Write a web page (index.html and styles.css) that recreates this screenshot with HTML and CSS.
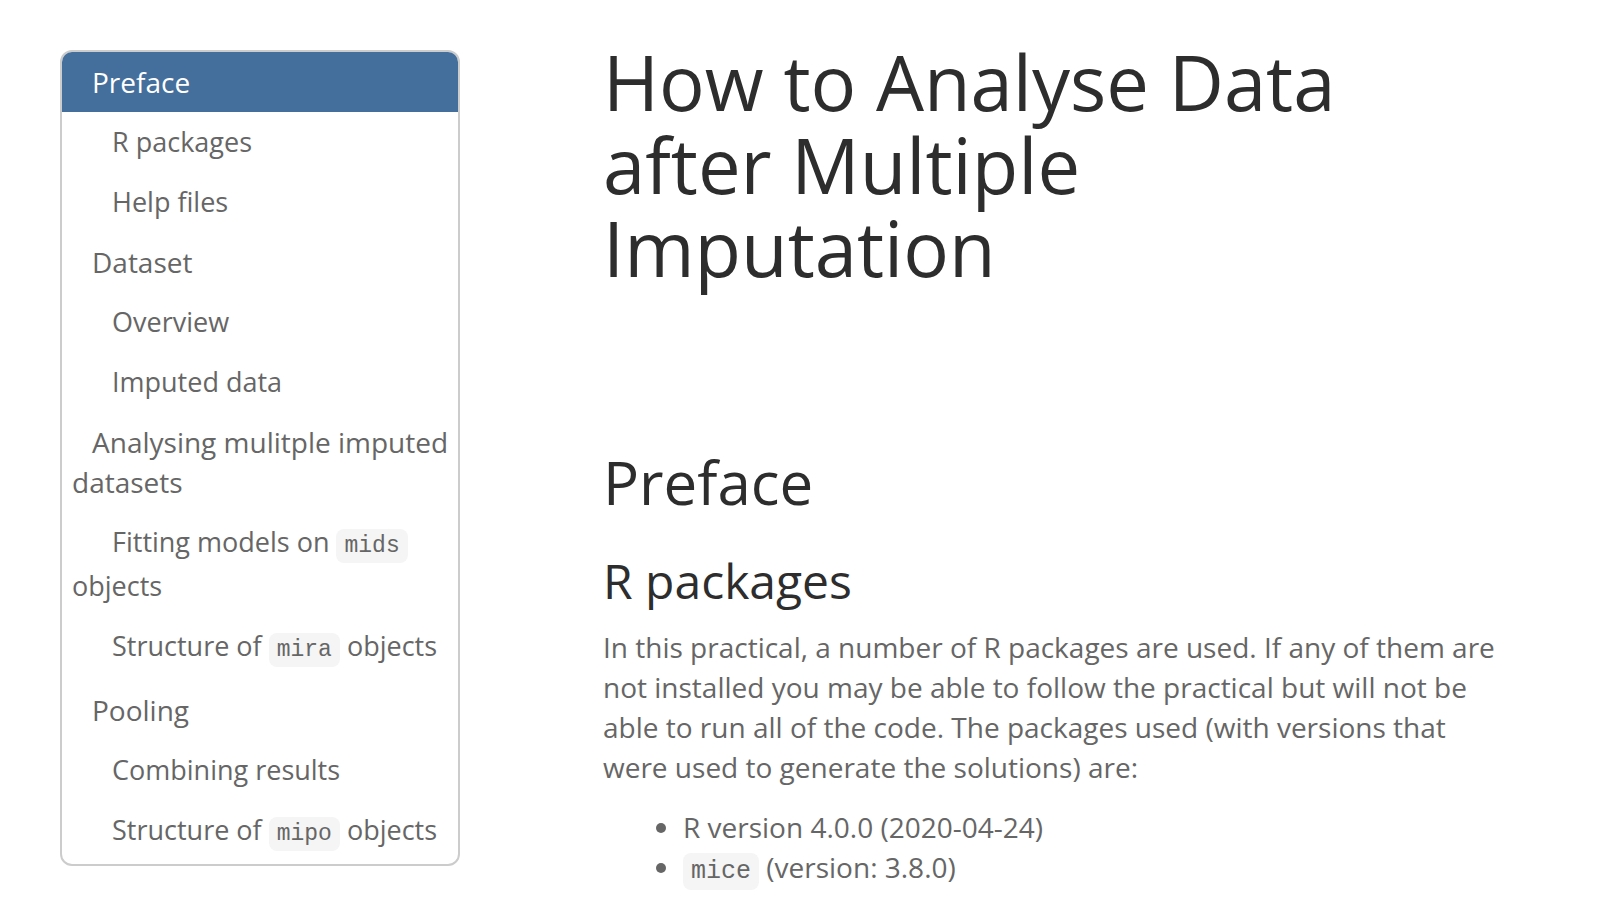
FILE: index.html
```html
<!DOCTYPE html>
<html lang="en">
<head>
<meta charset="utf-8">
<title>How to Analyse Data after Multiple Imputation</title>
<link rel="stylesheet" href="styles.css">
</head>
<body>
<div class="page">
  <nav class="toc">
    <a class="item active" href="#preface">Preface</a>
    <a class="item sub" href="#r-packages">R packages</a>
    <a class="item sub" href="#help">Help files</a>
    <a class="item" href="#dataset">Dataset</a>
    <a class="item sub" href="#overview">Overview</a>
    <a class="item sub" href="#imputed">Imputed data</a>
    <a class="item" href="#analysing">Analysing mulitple imputed datasets</a>
    <a class="item sub" href="#fitting">Fitting models on <code>mids</code> objects</a>
    <a class="item sub" href="#mira">Structure of <code>mira</code> objects</a>
    <a class="item" href="#pooling">Pooling</a>
    <a class="item sub" href="#combining">Combining results</a>
    <a class="item sub" href="#mipo">Structure of <code>mipo</code> objects</a>
  </nav>
  <main class="content">
    <h1 class="title">How to Analyse Data after Multiple Imputation</h1>
    <h2 class="section" id="preface">Preface</h2>
    <h3 class="subsection" id="r-packages">R packages</h3>
    <p class="text">In this practical, a number of R packages are used. If any of them are not installed you may be able to follow the practical but will not be able to run all of the code. The packages used (with versions that were used to generate the solutions) are:</p>
    <ul class="list">
      <li>R version 4.0.0 (2020-04-24)</li>
      <li><code>mice</code> (version: 3.8.0)</li>
    </ul>
  </main>
</div>
</body>
</html>
```
FILE: styles.css
```css
* {
  box-sizing: border-box;
}

body {
  margin: 0;
  background: #fff;
  color: #666;
  font: 28px/40px "Open Sans", sans-serif;
}

.page {
  display: grid;
  grid-template-columns: 400px 1fr;
  column-gap: 143px;
  align-items: start;
  padding: 40px 100px 0 60px;
}

.toc {
  margin-top: 10px;
  border: 2px solid #ccc;
  border-radius: 12px;
  overflow: hidden;
}

.item {
  display: block;
  padding: 10px 4px 10px 10px;
  color: inherit;
  text-decoration: none;
  text-indent: 20px;
}

.sub {
  font-size: 27px;
  text-indent: 40px;
}

.active {
  background: #446e9b;
  color: #fff;
}

code {
  padding: 4px 8px;
  border-radius: 8px;
  background: #f5f5f5;
  font: 25px/40px "Courier New", "Liberation Mono", monospace;
}

.item code {
  font-size: 23px;
}

.title,
.section,
.subsection {
  margin: 0;
  color: #2d2d2d;
  font-weight: 400;
}

.title {
  max-width: 800px;
  font-size: 76px;
  line-height: 83px;
}

.section {
  margin-top: 160px;
  font-size: 60px;
  line-height: 66px;
}

.subsection {
  margin-top: 40px;
  font-size: 48px;
  line-height: 52px;
}

.text {
  margin: 20px 0;
}

.list {
  margin: 0;
  padding-left: 80px;
}
```
